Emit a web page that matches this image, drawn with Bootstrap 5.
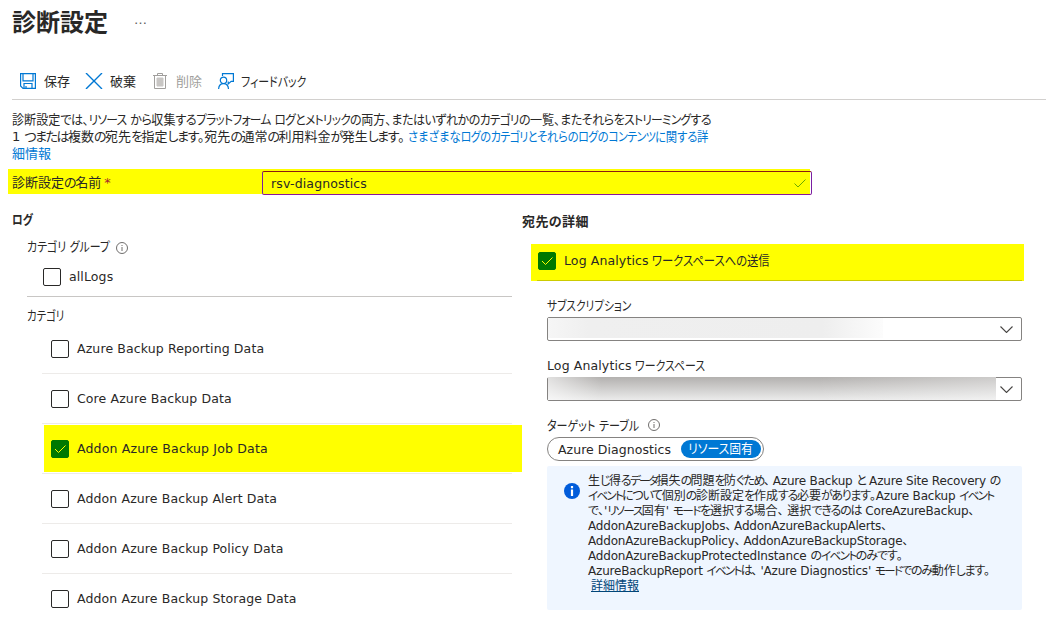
<!DOCTYPE html>
<html lang="ja">
<head>
<meta charset="utf-8">
<meta name="viewport" content="width=device-width, initial-scale=1">
<title>診断設定</title>
<link href="https://cdn.jsdelivr.net/npm/bootstrap@5.3.0/dist/css/bootstrap.min.css" rel="stylesheet">
<style>
body{font:13px/18px "DejaVu Sans","Noto Sans CJK JP",sans-serif;font-feature-settings:"palt";color:#292827;background:#fff;white-space:nowrap;overflow:hidden}
svg{display:block;flex:none;fill:none}
.latin{font-size:12.5px;letter-spacing:.12px}
/* kana set tighter than kanji: i = katakana, u = hiragana */
.kana i{font-style:normal;letter-spacing:var(--k,-2.2px);font-size:.97em}
.kana u{text-decoration:none;letter-spacing:var(--h,-1.4px)}
.narrow{display:inline-block;transform-origin:0 50%}
.page-title{font-size:24px;font-weight:700;line-height:36px;padding:5px 0 0 12px;height:66px}
.page-title small{font-size:13px;line-height:29px;color:#605e5c;margin-left:26px}
.toolbar{height:34px;margin-left:12px;padding-left:8px;border-bottom:1px solid #d2d0ce}
.tool{height:30px}
.tool>span{padding-top:2px}
.intro{padding:11px 0 0 12px;line-height:17.2px;height:69px}
.intro a,.intro a:hover{color:#0078d4;text-decoration:none}
.name-row{margin-left:8px;width:804px;height:26px;background:linear-gradient(#ff0,#ff0) 0 0/802px 25px no-repeat}
.name-row label{width:254px;padding:2px 0 0 4px}
.name-input{width:550px;height:24px;margin-top:2px;border:1px solid;border-color:#8b1a10 #7a1fa2 #881798;border-radius:2px;padding:0 5px 0 8px}
.name-input .latin{padding-top:1px}
.req{color:#a4262c}
.logs{width:512px;padding-left:12px}
.heading{font-weight:700}
.group-block{margin-left:15px;width:485px;border-bottom:1px solid #c8c6c4;height:34px;padding:5px 0 0 16px;gap:8px}
.box{width:18px;height:18px;border:1px solid #292827;border-radius:2px;flex:none}
.box.on{background:#007800;border-color:#007800}
.item{margin-left:30px;width:470px;height:50px;padding-left:9px;border-bottom:1px solid #edebe9;gap:8px}
.item:last-child{border:0}
.item.hit{background:linear-gradient(#ff0,#ff0) 2px 1px/478px 47px no-repeat;width:480px;border:0;position:relative}
.item.hit::after{content:"";position:absolute;left:0;bottom:0;width:470px;height:1px;background:#edebe9}
.item.hit .latin{letter-spacing:.17px}
.dest{width:524px;padding-left:10px}
.send{margin-left:9px;width:493px;height:37px;background:linear-gradient(#cccb00,#cccb00) 6px 36px/485px 1px no-repeat #ff0;padding:8px 0 0 7px;gap:8px}
.fields{margin-left:25px;width:475px}
.field-label{padding-top:16px;height:36px}
.pick{height:24px;border:1px solid #858381;border-radius:2px}
.pick svg{margin:8px 8px 0 0}
.pick .veil{height:20px;width:335px;background:linear-gradient(90deg,#f6f6f6,#efefef 12%,#eee 82%,#fcfcfc)}
.pick.shade{position:relative}
.pick .dusk{position:absolute;left:0;top:-1px;width:448px;height:23px;background:linear-gradient(90deg,#fff9,#fff0 12%,#fff0 60%,#fff5),linear-gradient(#b3b1af,#ebebeb)}
.pill{width:217px;height:24px;border:1px solid #858381;border-radius:12px;padding:0 2px 0 10px}
.pill .latin{padding-top:1px;letter-spacing:.05px}
.pill b{font-weight:400;background:#0078d4;color:#fff;border-radius:9px;height:18px;width:80px;padding-left:7px}
.note{height:144px;background:#eff6ff;border-radius:2px;margin-top:5px;padding:8px 0 0 17px;font-size:12px;line-height:15px;gap:8px}
.note s{text-decoration:none;letter-spacing:-.19px}
.note s+s,.note .after{margin-left:3px}
.note a{color:#004578;margin-left:3px}
</style>
</head>
<body>
<header class="page-title d-flex"><span>診断設定</span><small class="fw-normal">…</small></header>
<nav class="toolbar d-flex">
  <div class="tool d-flex align-items-center" style="width:65px"><svg width="16" height="16" stroke="#0078d4" stroke-width="1.2"><path d="M.6.6h14.8v14.8H3L.6 13zM3 .6v7.2h10V.6M4 15v-4.5h8V15M6 13v2"/></svg><span class="ms-2">保存</span></div>
  <div class="tool d-flex align-items-center" style="width:68px"><svg width="18" height="16" stroke="#0078d4" stroke-width="1.4"><path d="M1 0l16 16M17 0L1 16"/></svg><span style="margin-left:7px">破棄</span></div>
  <div class="tool d-flex align-items-center" style="width:65px;color:#a19f9d"><svg width="14" height="17" stroke="#a19f9d"><path d="M0 2.5h14M4.500 2V.5h5V2M1.500 3v12.500h11V3"/><path d="M4 5h6v8H4z" fill="#c8c6c4" stroke="#c8c6c4"/></svg><span style="margin-left:9px">削除</span></div>
  <div class="tool d-flex align-items-center"><svg width="16" height="16" stroke="#0078d4" stroke-width="1.2"><path d="M4.500 3V.6h10.900v7.800h-2.200l-3 2.600V8.400"/><circle cx="5.500" cy="7.300" r="3.200"/><path d="M.6 16c.2-3.200 2.200-5.300 4.900-5.300S10.300 12.800 10.500 16"/></svg><span class="narrow" style="margin-left:7px;transform:scaleX(.84)">フィードバック</span></div>
</nav>
<main>
  <div class="intro kana">
    <div><span class="narrow" style="--k:-.8px;--h:-.6px;transform:scaleX(.93)">診断設定<u>では</u>、<i>リソース</i> <u>から</u>収集<u>する</u><i>プラットフォーム</i> <i>ログ</i><u>と</u><i>メトリック</i><u>の</u>両方、<u>またはいずれかの</u><i>カテゴリ</i><u>の</u>一覧、<u>またそれらを</u><i>ストリーミング</i><u>する</u></span></div>
    <div><span style="--h:-1.5px">1 <u>つまたは</u>複数<u>の</u>宛先<u>を</u>指定<u>します</u>。宛先<u>の</u>通常<u>の</u>利用料金<u>が</u>発生<u>します</u>。</span> <a href="#" class="narrow" style="--k:-.7px;--h:-.3px;transform:scaleX(.87);margin-left:-1px">さまざまな<i>ログ</i><u>の</u><i>カテゴリ</i><u>とそれらの</u><i>ログ</i><u>の</u><i>コンテンツ</i><u>に</u>関<u>する</u>詳</a></div>
    <div><a href="#">細情報</a></div>
  </div>
  <div class="name-row d-flex">
    <label class="kana d-flex align-items-center" style="--h:-1.3px"><span>診断設定<u>の</u>名前</span><span class="req" style="margin-left:3px">*</span></label>
    <div class="name-input d-flex align-items-center justify-content-between"><span class="latin">rsv-diagnostics</span><svg width="12" height="9" stroke="#6ba800"><path d="M.5 4.500L4 8l7.500-7.500"/></svg></div>
  </div>
  <div class="d-flex">
    <section class="logs">
      <div class="heading" style="height:27px;padding-top:16px"><span class="narrow" style="transform:scaleX(.82)">ログ</span></div>
      <div style="margin:16px 0 0 15px;height:25px" class="d-flex"><span style="width:89px"><span class="narrow" style="transform:scaleX(.84)">カテゴリ グループ</span></span><svg width="12" height="12" style="margin-top:4px" stroke="#605e5c" stroke-width=".9"><circle cx="6" cy="6" r="5.500"/><path d="M6 5v4M6 3v1"/></svg></div>
      <div class="group-block d-flex"><span class="box"></span><span class="latin">allLogs</span></div>
      <div style="margin:10px 0 0 15px;height:17px"><span class="narrow" style="transform:scaleX(.8)">カテゴリ</span></div>
      <div class="item d-flex align-items-center"><span class="box"></span><span class="latin">Azure Backup Reporting Data</span></div>
      <div class="item d-flex align-items-center"><span class="box"></span><span class="latin">Core Azure Backup Data</span></div>
      <div class="item hit d-flex align-items-center"><span class="box on"><svg width="16" height="16" stroke="#ff0"><path d="M3 8l3.500 3.500L13.500 4.500"/></svg></span><span class="latin">Addon Azure Backup Job Data</span></div>
      <div class="item d-flex align-items-center"><span class="box"></span><span class="latin">Addon Azure Backup Alert Data</span></div>
      <div class="item d-flex align-items-center"><span class="box"></span><span class="latin">Addon Azure Backup Policy Data</span></div>
      <div class="item d-flex align-items-center"><span class="box"></span><span class="latin">Addon Azure Backup Storage Data</span></div>
    </section>
    <section class="dest">
      <div class="heading" style="height:49px;padding-top:18px;letter-spacing:.4px">宛先の詳細</div>
      <div class="send d-flex"><span class="box on"><svg width="16" height="16" stroke="#ff0"><path d="M3 8l3.500 3.500L13.500 4.500"/></svg></span><span><span class="latin">Log Analytics</span> <span class="narrow" style="margin-left:-1px;transform:scaleX(.87)">ワークスペースへの送信</span></span></div>
      <div class="fields">
        <div class="field-label"><span class="narrow" style="transform:scaleX(.82)">サブスクリプション</span></div>
        <div class="pick d-flex justify-content-between"><div class="veil"></div><svg width="13" height="7" stroke="#484644" stroke-width="1.1"><path d="M.5.5l6 6 6-6"/></svg></div>
        <div class="field-label"><span class="latin">Log Analytics</span> <span class="narrow" style="margin-left:-1px;transform:scaleX(.84)">ワークスペース</span></div>
        <div class="pick shade d-flex justify-content-end"><div class="dusk"></div><svg width="13" height="7" stroke="#484644" stroke-width="1.1"><path d="M.5.5l6 6 6-6"/></svg></div>
        <div class="field-label d-flex"><span style="width:101px"><span class="narrow" style="transform:scaleX(.85)">ターゲット テーブル</span></span><svg width="12" height="12" style="margin-top:2px" stroke="#605e5c" stroke-width=".9"><circle cx="6" cy="6" r="5.500"/><path d="M6 5v4M6 3v1"/></svg></div>
        <div class="pill d-flex align-items-center justify-content-between"><span class="latin">Azure Diagnostics</span><b><span class="narrow" style="transform:scaleX(.91)">リソース固有</span></b></div>
        <div class="note d-flex">
          <svg width="16" height="16" style="margin-top:9px"><circle cx="8" cy="8" r="8" fill="#015cda"/><path d="M8 3v2.200M8 6.500V13" stroke="#fff" stroke-width="2.200"/></svg>
          <div class="kana">
            <div style="--k:-2px;--h:-1.6px">生<u>じ</u>得<u>る</u><i>データ</i>損失<u>の</u>問題<u>を</u>防<u>ぐため</u>、<s class="after">Azure Backup</s> <u>と</u> <s>Azure Site Recovery</s> <u>の</u></div>
            <div style="--k:-1.8px;--h:-1.3px"><i>イベント</i><u>について</u>個別<u>の</u>診断設定<u>を</u>作成<u>する</u>必要<u>があります</u>。<s>Azure Backup</s> <i>イベント</i></div>
            <div style="--k:-1.5px;--h:-1.1px"><u>で</u>、'<i>リソース</i>固有' <i>モード</i><u>を</u>選択<u>する</u>場合、 選択<u>できるのは</u> <s>CoreAzureBackup</s>、</div>
            <div><s>AddonAzureBackupJobs、</s><s>AddonAzureBackupAlerts、</s></div>
            <div><s>AddonAzureBackupPolicy、</s><s>AddonAzureBackupStorage、</s></div>
            <div style="--k:-1.6px;--h:-1.1px"><s>AddonAzureBackupProtectedInstance</s> <u>の</u><i>イベント</i><u>のみです</u>。</div>
            <div style="--k:-1.8px;--h:-1.3px"><s>AzureBackupReport</s> <i>イベント</i><u>は</u>、<s class="after">'Azure Diagnostics'</s> <i>モード</i><u>でのみ</u>動作<u>します</u>。</div>
            <div><a href="#">詳細情報</a></div>
          </div>
        </div>
      </div>
    </section>
  </div>
</main>
<script src="https://cdn.jsdelivr.net/npm/bootstrap@5.3.0/dist/js/bootstrap.bundle.min.js"></script>
</body>
</html>
